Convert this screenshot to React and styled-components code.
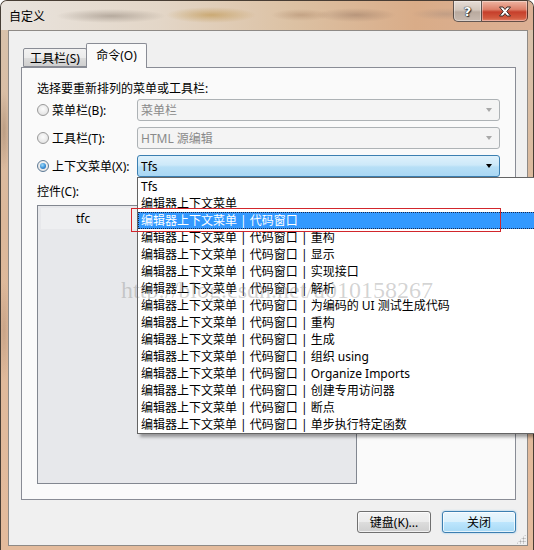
import React from "react";
import styled, { createGlobalStyle } from "styled-components";

const FONT = `"Noto Sans", "Noto Sans CJK SC", sans-serif`;

const GlobalStyle = createGlobalStyle`
  html, body { margin: 0; padding: 0; background: #ffffff; }
  body { overflow: hidden; font-family: ${FONT}; font-size: 12px; color: #000; }
  * { box-sizing: border-box; }
`;

const Window = styled.div`
  position: relative;
  width: 534px;
  height: 550px;
  display: flex;
  flex-direction: column;
  border: 1px solid rgba(45, 40, 35, 0.85);
  border-bottom: none;
  border-radius: 7px 7px 0 0;
  background:
    radial-gradient(ellipse 6px 40px at 3px 130px, rgba(150, 120, 95, 0.45), transparent),
    radial-gradient(ellipse 6px 50px at 3px 330px, rgba(160, 125, 100, 0.35), transparent),
    linear-gradient(to bottom, #d8c3ad 0%, #dcb89a 40%, #e4bb9c 100%);
`;

const TitleBar = styled.div`
  height: 29px;
  display: flex;
  align-items: flex-start;
  padding-left: 8px;
  border-radius: 6px 6px 0 0;
  background:
    radial-gradient(ellipse 55px 7px at 110px 15px, rgba(125, 112, 100, 0.45), transparent),
    radial-gradient(ellipse 45px 8px at 210px 14px, rgba(185, 140, 60, 0.55), transparent),
    radial-gradient(ellipse 30px 6px at 300px 14px, rgba(150, 110, 80, 0.35), transparent),
    radial-gradient(ellipse 40px 7px at 355px 14px, rgba(120, 90, 75, 0.35), transparent),
    radial-gradient(ellipse 35px 6px at 445px 13px, rgba(150, 130, 120, 0.35), transparent),
    linear-gradient(to right, #e9e4de 0%, #e3d6c7 30%, #dcc1a3 55%, #d9ac88 78%, #dcb094 100%);
`;

const Title = styled.div`
  line-height: 17px;
  margin-top: 7px;
  color: #000;
`;

const CaptionButtons = styled.div`
  margin-left: auto;
  margin-right: 5px;
  display: flex;
  height: 21px;
`;

const CaptionButton = styled.div`
  width: ${(p) => p.$w}px;
  height: 21px;
  display: flex;
  align-items: center;
  justify-content: center;
  border: 1px solid rgba(55, 45, 40, 0.75);
  border-top: none;
  border-left: ${(p) => (p.$first ? "1px solid rgba(55, 45, 40, 0.75)" : "none")};
  border-radius: ${(p) => (p.$first ? "0 0 0 5px" : "0 0 5px 0")};
  background: ${(p) => p.$bg};
  box-shadow: inset 0 0 0 1px rgba(255, 255, 255, 0.35);
  color: #fff;
  font-family: "DejaVu Sans", sans-serif;
  font-weight: bold;
  font-size: 13px;
  text-shadow: 0 0 1px #222, 0 0 1px #222, 1px 1px 1px #333;
`;

const Client = styled.div`
  position: relative;
  flex: 1;
  margin: 0 5px 4px 7px;
  border: 1px solid #8e8a86;
  background: #f0f0f0;
  padding: 12px 11px 11px 12px;
  display: flex;
  flex-direction: column;
`;

const TabStrip = styled.div`
  height: 24px;
  display: flex;
  align-items: flex-end;
  padding-left: 2px;
  position: relative;
  z-index: 1;
`;

const Tab = styled.div`
  width: ${(p) => p.$w}px;
  height: ${(p) => (p.$active ? 25 : 19)}px;
  margin-bottom: ${(p) => (p.$active ? -1 : 0)}px;
  margin-left: ${(p) => (p.$active ? -1 : 0)}px;
  display: flex;
  align-items: center;
  justify-content: center;
  padding-bottom: ${(p) => (p.$active ? 2 : 0)}px;
  border: 1px solid #898c95;
  border-bottom: ${(p) => (p.$active ? "none" : "1px solid #898c95")};
  border-radius: 2px 2px 0 0;
  background: ${(p) =>
    p.$active
      ? "#fafafa"
      : "linear-gradient(#f2f2f2 0%, #ebebeb 50%, #dddddd 50%, #cfcfcf 100%)"};
  white-space: nowrap;
`;

const Panel = styled.div`
  height: 433px;
  border: 1px solid #898c95;
  background: #fafafa;
  padding: 12px 15px 15px 15px;
  display: flex;
  flex-direction: column;
`;

const Caption = styled.div`
  line-height: 17px;
  height: 17px;
  margin-top: ${(p) => p.$mt || 0}px;
`;

const Row = styled.div`
  display: flex;
  align-items: center;
  height: 22px;
  margin-top: ${(p) => p.$mt}px;
`;

const RadioLabel = styled.div`
  width: 100px;
  display: flex;
  align-items: center;
  gap: 3px;
  white-space: nowrap;
`;

const Radio = styled.span`
  width: 12px;
  height: 12px;
  border-radius: 50%;
  border: 1px solid ${(p) => (p.$on ? "#5d7a96" : "#9a9a9a")};
  background: radial-gradient(circle at 50% 40%, #fcfcfc 0%, #e9e9e9 60%, #d4d4d4 100%);
  display: flex;
  align-items: center;
  justify-content: center;
  &::after {
    content: "";
    display: ${(p) => (p.$on ? "block" : "none")};
    width: 6px;
    height: 6px;
    border-radius: 50%;
    background: radial-gradient(circle at 40% 35%, #9fdcfa 0%, #3a8fd6 55%, #1b5a9c 100%);
  }
`;

const ComboWrap = styled.div`
  position: relative;
  flex: 1;
  height: 22px;
`;

const Combo = styled.div`
  height: 22px;
  display: flex;
  align-items: center;
  padding: 0 7px 0 3px;
  border: 1px solid ${(p) => (p.$active ? "#3c7fb1" : "#adb2b5")};
  border-radius: 3px;
  background: ${(p) =>
    p.$active
      ? "linear-gradient(#dff1fb 0%, #cde9f9 45%, #b7dff6 55%, #a9d7f4 100%)"
      : "#f4f4f4"};
  color: ${(p) => (p.$active ? "#000" : "#8a8a8a")};
  white-space: nowrap;
`;

const Arrow = styled.span`
  margin-left: auto;
  width: 0;
  height: 0;
  border-left: 3.5px solid transparent;
  border-right: 3.5px solid transparent;
  border-top: 4px solid ${(p) => (p.$active ? "#000" : "#a8a8a8")};
`;

const DropList = styled.div`
  position: absolute;
  top: 100%;
  left: 0;
  width: 410px;
  border: 1px solid #646464;
  background: #ffffff;
  box-shadow: 3px 3px 3px rgba(0, 0, 0, 0.35);
  z-index: 10;
`;

const DropItem = styled.div`
  height: 17px;
  line-height: 17px;
  padding-left: 3px;
  white-space: nowrap;
  color: ${(p) => (p.$sel ? "#fff" : "#000")};
  background: ${(p) => (p.$sel ? "#3399ff" : "transparent")};
  outline: ${(p) => (p.$sel ? "1px dotted #1a2a50" : "none")};
  outline-offset: -1px;
`;

const RedMark = styled.div`
  position: absolute;
  left: -7px;
  top: 30px;
  width: 370px;
  height: 24px;
  border: 1px solid #d2262c;
  pointer-events: none;
`;

const ListBox = styled.div`
  margin-top: 5px;
  width: 320px;
  flex: 1;
  border: 1px solid #828790;
  background: #e7e8eb;
  padding: 2px 0 0 3px;
`;

const ListItem = styled.div`
  height: 21px;
  line-height: 21px;
  padding-left: 35px;
  margin-right: 40px;
  background: #eeeff1;
`;

const Footer = styled.div`
  margin-top: 11px;
  display: flex;
  justify-content: flex-end;
  gap: 11px;
`;

const Button = styled.div`
  width: 74px;
  height: 22px;
  display: flex;
  align-items: center;
  justify-content: center;
  border: 1px solid ${(p) => (p.$default ? "#3c7fb1" : "#707070")};
  border-radius: 3px;
  background: ${(p) =>
    p.$default
      ? "linear-gradient(#eaf6fd 0%, #d9f0fc 50%, #bee6fd 50%, #a7d9f5 100%)"
      : "linear-gradient(#f2f2f2 0%, #ebebeb 50%, #dddddd 50%, #cfcfcf 100%)"};
  box-shadow: inset 0 0 0 1px rgba(255, 255, 255, 0.7)
    ${(p) => (p.$default ? ", 0 0 2px rgba(60, 160, 230, 0.6)" : "")};
  white-space: nowrap;
`;

const Grip = styled.div`
  position: absolute;
  right: 1px;
  bottom: 1px;
  width: 10px;
  height: 10px;
  background: radial-gradient(circle, #a8a8a8 0.8px, transparent 1.2px) 0 0 / 3px 3px;
  clip-path: polygon(100% 0, 100% 100%, 0 100%);
`;

const Watermark = styled.div`
  position: absolute;
  left: 120px;
  top: 277px;
  font-family: "Liberation Serif", serif;
  font-size: 24px;
  line-height: 24px;
  color: rgba(120, 120, 120, 0.32);
  white-space: nowrap;
  pointer-events: none;
  z-index: 20;
`;

const items = [
  "Tfs",
  "编辑器上下文菜单",
  "编辑器上下文菜单 | 代码窗口",
  "编辑器上下文菜单 | 代码窗口 | 重构",
  "编辑器上下文菜单 | 代码窗口 | 显示",
  "编辑器上下文菜单 | 代码窗口 | 实现接口",
  "编辑器上下文菜单 | 代码窗口 | 解析",
  "编辑器上下文菜单 | 代码窗口 | 为编码的 UI 测试生成代码",
  "编辑器上下文菜单 | 代码窗口 | 重构",
  "编辑器上下文菜单 | 代码窗口 | 生成",
  "编辑器上下文菜单 | 代码窗口 | 组织 using",
  "编辑器上下文菜单 | 代码窗口 | Organize Imports",
  "编辑器上下文菜单 | 代码窗口 | 创建专用访问器",
  "编辑器上下文菜单 | 代码窗口 | 断点",
  "编辑器上下文菜单 | 代码窗口 | 单步执行特定函数",
];

const CloseGlyph = () => (
  <svg width="14" height="11" viewBox="0 0 14 11">
    <path
      d="M1.5 1 L5 1 L7 3.5 L9 1 L12.5 1 L8.8 5.5 L12.5 10 L9 10 L7 7.5 L5 10 L1.5 10 L5.2 5.5 Z"
      fill="#fff"
      stroke="#3a2a25"
      strokeWidth="1"
      strokeLinejoin="round"
    />
  </svg>
);

export default function App() {
  return (
    <>
      <GlobalStyle />
      <Window>
        <TitleBar>
          <Title>自定义</Title>
          <CaptionButtons>
            <CaptionButton
              $w={29}
              $first
              $bg="linear-gradient(#e6ddd6 0%, #d2c6bc 45%, #b9aa9f 55%, #c8bab0 100%)"
            >
              ?
            </CaptionButton>
            <CaptionButton
              $w={46}
              $bg="linear-gradient(#eeb5a2 0%, #dd806a 42%, #c63f2b 55%, #d25a3f 85%, #e3846a 100%)"
            >
              <CloseGlyph />
            </CaptionButton>
          </CaptionButtons>
        </TitleBar>

        <Client>
          <TabStrip>
            <Tab $w={64}>工具栏(S)</Tab>
            <Tab $w={61} $active>
              命令(O)
            </Tab>
          </TabStrip>
          <Panel>
            <Caption>选择要重新排列的菜单或工具栏:</Caption>
            <Row $mt={2}>
              <RadioLabel>
                <Radio />
                菜单栏(B):
              </RadioLabel>
              <ComboWrap>
                <Combo>
                  菜单栏
                  <Arrow />
                </Combo>
              </ComboWrap>
            </Row>
            <Row $mt={6}>
              <RadioLabel>
                <Radio />
                工具栏(T):
              </RadioLabel>
              <ComboWrap>
                <Combo>
                  HTML 源编辑
                  <Arrow />
                </Combo>
              </ComboWrap>
            </Row>
            <Row $mt={6}>
              <RadioLabel>
                <Radio $on />
                上下文菜单(X):
              </RadioLabel>
              <ComboWrap>
                <Combo $active>
                  Tfs
                  <Arrow $active />
                </Combo>
                <DropList>
                  {items.map((t, i) => (
                    <DropItem key={i} $sel={i === 2}>
                      {t}
                    </DropItem>
                  ))}
                  <RedMark />
                </DropList>
              </ComboWrap>
            </Row>
            <Caption $mt={6}>控件(C):</Caption>
            <ListBox>
              <ListItem>tfc</ListItem>
            </ListBox>
          </Panel>
          <Footer>
            <Button>键盘(K)...</Button>
            <Button $default>关闭</Button>
          </Footer>
          <Grip />
        </Client>
        <Watermark>http://blog.csdn.net/u010158267</Watermark>
      </Window>
    </>
  );
}
